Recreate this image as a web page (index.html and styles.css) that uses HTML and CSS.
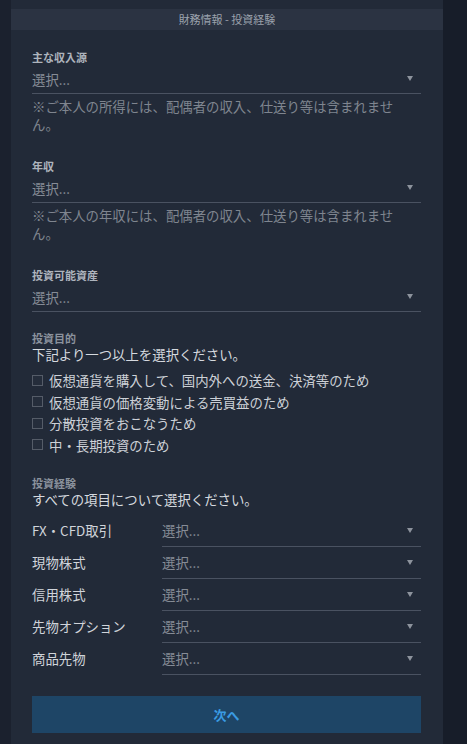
FILE: index.html
```html
<!DOCTYPE html>
<html lang="ja">
<head>
  <meta charset="utf-8">
  <title>財務情報 - 投資経験</title>
  <link rel="stylesheet" href="styles.css">
</head>
<body>
  <div class="page">
    <div class="side-left"></div>
    <div class="card">
      <div class="card-header">財務情報 - 投資経験</div>
      <form class="form">
        <div class="field first">
          <div class="field-label">主な収入源</div>
          <div class="select"><span>選択...</span><i class="arrow"></i></div>
          <p class="help">※ご本人の所得には、配偶者の収入、仕送り等は含まれません。</p>
        </div>

        <div class="field">
          <div class="field-label">年収</div>
          <div class="select"><span>選択...</span><i class="arrow"></i></div>
          <p class="help">※ご本人の年収には、配偶者の収入、仕送り等は含まれません。</p>
        </div>

        <div class="field">
          <div class="field-label">投資可能資産</div>
          <div class="select"><span>選択...</span><i class="arrow"></i></div>
        </div>

        <div class="field">
          <div class="field-label dim">投資目的</div>
          <div class="intro">下記より一つ以上を選択ください。</div>
          <ul class="checks">
            <li><span class="box"></span>仮想通貨を購入して、国内外への送金、決済等のため</li>
            <li><span class="box"></span>仮想通貨の価格変動による売買益のため</li>
            <li><span class="box"></span>分散投資をおこなうため</li>
            <li><span class="box"></span>中・長期投資のため</li>
          </ul>
        </div>

        <div class="field">
          <div class="field-label dim">投資経験</div>
          <div class="intro">すべての項目について選択ください。</div>
          <div class="exp-list">
            <div class="exp-row">
              <div class="exp-name">FX・CFD取引</div>
              <div class="select"><span>選択...</span><i class="arrow"></i></div>
            </div>
            <div class="exp-row">
              <div class="exp-name">現物株式</div>
              <div class="select"><span>選択...</span><i class="arrow"></i></div>
            </div>
            <div class="exp-row">
              <div class="exp-name">信用株式</div>
              <div class="select"><span>選択...</span><i class="arrow"></i></div>
            </div>
            <div class="exp-row">
              <div class="exp-name">先物オプション</div>
              <div class="select"><span>選択...</span><i class="arrow"></i></div>
            </div>
            <div class="exp-row">
              <div class="exp-name">商品先物</div>
              <div class="select"><span>選択...</span><i class="arrow"></i></div>
            </div>
          </div>
        </div>

        <button type="button" class="next-btn">次へ</button>
      </form>
    </div>
    <div class="side-right"></div>
  </div>
</body>
</html>
```

FILE: styles.css
```css
/* Dark form panel */
body {
  margin: 0;
  font-family: "Noto Sans CJK JP", "Noto Sans", sans-serif;
  background-color: #171d29;
  height: 744px;
  overflow: hidden;
}

.page {
  display: grid;
  grid-template-columns: 11px 432px 1fr;
  min-height: 744px;
}

.side-left {
  background-color: #1b212e;
}

.side-right {
  background-color: #171d29;
}

.card {
  background-color: #222a38;
  padding-top: 9px;
}

.card-header {
  height: 21px;
  line-height: 21px;
  text-align: center;
  font-size: 11px;
  color: #9ba2ad;
  background-color: #2b3342;
}

.form {
  display: flex;
  flex-direction: column;
  padding: 0 22px 0 21px;
}

.field {
  margin-top: 19px;
}

.field.first {
  margin-top: 20px;
}

.field-label {
  height: 14px;
  line-height: 14px;
  font-size: 11px;
  font-weight: bold;
  color: #aeb4bd;
}

.field-label.dim {
  color: #8b929d;
}

.select {
  display: flex;
  align-items: center;
  justify-content: space-between;
  height: 29px;
  border-bottom: 1px solid #4a5261;
  font-size: 13.4px;
  color: #868c96;
}

.arrow {
  width: 0;
  height: 0;
  margin-right: 8px;
  border-left: 3px solid transparent;
  border-right: 3px solid transparent;
  border-top: 5px solid #8d939d;
}

.help {
  margin: 3px 0 7px;
  max-width: 380px;
  font-size: 13.4px;
  line-height: 18px;
  color: #7f858f;
}

.intro {
  height: 18px;
  line-height: 18px;
  font-size: 13.4px;
  color: #d5d9df;
}

.checks {
  list-style: none;
  margin: 6.5px 0 1px;
  padding: 0;
}

.checks li {
  display: flex;
  align-items: center;
  height: 21.5px;
  font-size: 13.4px;
  color: #cdd1d7;
}

.box {
  width: 9px;
  height: 9px;
  margin-right: 6px;
  border: 1px solid #555c68;
  background-color: #252d3b;
}

.exp-list {
  margin-top: 7px;
}

.exp-row {
  display: flex;
  align-items: flex-end;
}

.exp-name {
  width: 130px;
  height: 32px;
  line-height: 31px;
  font-size: 13.4px;
  color: #d0d4da;
}

.exp-row .select {
  flex: 1;
  height: 31px;
}

.next-btn {
  display: block;
  width: 100%;
  height: 37px;
  margin-top: 21px;
  border: none;
  border-radius: 0;
  background-color: #1e4566;
  color: #3a9be2;
  font-family: inherit;
  font-size: 13px;
  font-weight: bold;
  cursor: pointer;
}
```
